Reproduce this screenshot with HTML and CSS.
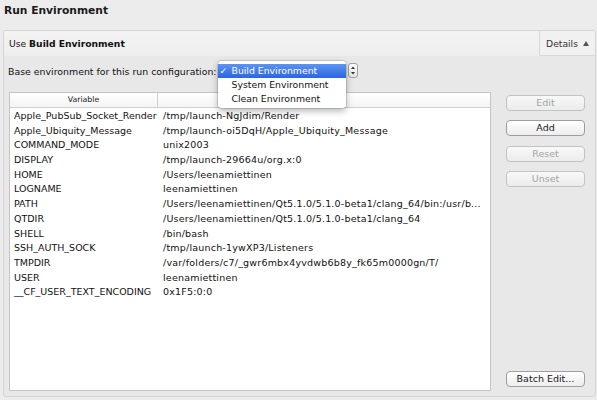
FILE: index.html
```html
<!DOCTYPE html>
<html>
<head>
<meta charset="utf-8">
<link rel="stylesheet" href="styles.css">
</head>
<body>
<div class="title">Run Environment</div>
<div class="panel">
  <div class="phead">
    <div class="use">Use <b>Build Environment</b></div>
    <div class="details"><span>Details</span><svg width="6" height="5" viewBox="0 0 6 5"><polygon points="3,0 6,5 0,5" fill="#555"/></svg></div>
  </div>
  <div class="pbody">
    <div class="baserow">
      <span class="baselabel">Base environment for this run configuration:</span>
      <div class="combo">
        <div class="combo-field"></div>
        <div class="stepper"><svg width="8" height="13" viewBox="0 0 8 13"><polygon points="4,2.5 6,5 2,5" fill="#333"/><polygon points="4,10.5 6,8 2,8" fill="#333"/></svg></div>
        <div class="popup">
          <div class="item sel"><span class="check">✓</span>Build Environment</div>
          <div class="item">System Environment</div>
          <div class="item">Clean Environment</div>
        </div>
      </div>
    </div>
    <div class="main">
      <div class="table">
        <div class="thead">
          <div class="th c1">Variable</div>
          <div class="th c2">Value</div>
        </div>
        <div class="tbody">
          <div class="tr"><div class="c1">Apple_PubSub_Socket_Render</div><div class="c2">/tmp/launch-NgJdim/Render</div></div>
          <div class="tr"><div class="c1">Apple_Ubiquity_Message</div><div class="c2">/tmp/launch-oi5DqH/Apple_Ubiquity_Message</div></div>
          <div class="tr"><div class="c1">COMMAND_MODE</div><div class="c2">unix2003</div></div>
          <div class="tr"><div class="c1">DISPLAY</div><div class="c2">/tmp/launch-29664u/org.x:0</div></div>
          <div class="tr"><div class="c1">HOME</div><div class="c2">/Users/leenamiettinen</div></div>
          <div class="tr"><div class="c1">LOGNAME</div><div class="c2">leenamiettinen</div></div>
          <div class="tr"><div class="c1">PATH</div><div class="c2">/Users/leenamiettinen/Qt5.1.0/5.1.0-beta1/clang_64/bin:/usr/b...</div></div>
          <div class="tr"><div class="c1">QTDIR</div><div class="c2">/Users/leenamiettinen/Qt5.1.0/5.1.0-beta1/clang_64</div></div>
          <div class="tr"><div class="c1">SHELL</div><div class="c2">/bin/bash</div></div>
          <div class="tr"><div class="c1">SSH_AUTH_SOCK</div><div class="c2">/tmp/launch-1ywXP3/Listeners</div></div>
          <div class="tr"><div class="c1">TMPDIR</div><div class="c2">/var/folders/c7/_gwr6mbx4yvdwb6b8y_fk65m0000gn/T/</div></div>
          <div class="tr"><div class="c1">USER</div><div class="c2">leenamiettinen</div></div>
          <div class="tr"><div class="c1">__CF_USER_TEXT_ENCODING</div><div class="c2">0x1F5:0:0</div></div>
        </div>
      </div>
      <div class="buttons">
        <div class="btn disabled">Edit</div>
        <div class="btn">Add</div>
        <div class="btn disabled">Reset</div>
        <div class="btn disabled">Unset</div>
        <div class="btn batch">Batch Edit...</div>
      </div>
    </div>
  </div>
</div>
</body>
</html>
```
FILE: styles.css
```css
html, body {
  margin: 0;
  padding: 0;
}
body {
  width: 597px;
  height: 400px;
  overflow: hidden;
  background: #ececec;
  font-family: "DejaVu Sans", "Liberation Sans", sans-serif;
  font-size: 9.5px;
  color: #111;
}
.title {
  height: 30px;
  box-sizing: border-box;
  padding: 4px 0 0 4px;
  font-weight: bold;
  font-size: 10.7px;
  line-height: 14px;
  color: #1a1a1a;
}
.panel {
  margin-left: 3px;
  width: 593px;
  height: 367px;
  box-sizing: border-box;
  border: 1px solid #d4d4d4;
  border-radius: 3px;
  background: #e8e8e8;
  display: flex;
  flex-direction: column;
  overflow: hidden;
}
.phead {
  height: 25px;
  display: flex;
  background: linear-gradient(#f3f3f3, #eeeeee);
}
.use {
  flex: 1;
  padding-left: 5px;
  line-height: 25px;
  font-size: 9.2px;
}
.details {
  width: 56px;
  box-sizing: border-box;
  border-left: 1px solid #d8d8d8;
  border-bottom: 1px solid #d8d8d8;
  border-bottom-left-radius: 2px;
  display: flex;
  align-items: center;
  justify-content: center;
  gap: 5px;
  color: #333;
  background: #f1f1f1;
  font-size: 9.2px;
}
.pbody {
  flex: 1;
  display: flex;
  flex-direction: column;
  padding: 7px 10px 5px 5px;
}
.baserow {
  height: 16px;
  margin-bottom: 13px;
  display: flex;
  align-items: center;
}
.baselabel {
  margin-left: -1px;
  font-size: 9.4px;
  white-space: nowrap;
}
.combo {
  position: relative;
  margin-left: 1px;
  width: 140px;
  height: 16px;
  display: flex;
}
.combo-field {
  flex: 1;
}
.stepper {
  width: 10px;
  height: 15px;
  box-sizing: border-box;
  border: 1px solid #a0a0a0;
  border-radius: 3px;
  background: linear-gradient(#ffffff, #e6e6e6);
  display: flex;
  align-items: center;
  justify-content: center;
}
.popup {
  position: absolute;
  left: 0;
  top: -2px;
  width: 128px;
  height: 47px;
  box-sizing: border-box;
  padding: 3px 0;
  background: rgba(255, 255, 255, 0.97);
  border-radius: 4px;
  box-shadow: 0 0 0 1px rgba(0,0,0,0.12), 0 3px 7px rgba(0,0,0,0.3);
}
.item {
  height: 14px;
  line-height: 14px;
  padding-left: 14px;
  position: relative;
  color: #111;
  white-space: nowrap;
  font-size: 9.3px;
}
.item.sel {
  background: linear-gradient(#5d93f2, #2c66de);
  color: #fff;
}
.check {
  position: absolute;
  left: 2px;
  top: 0;
  font-weight: bold;
}
.main {
  flex: 1;
  display: flex;
  gap: 15px;
}
.table {
  width: 482px;
  box-sizing: border-box;
  border: 1px solid #c4c4c4;
  background: #fff;
  overflow: hidden;
}
.thead {
  height: 15px;
  box-sizing: border-box;
  display: flex;
  border-bottom: 1px solid #cfcfcf;
  background: linear-gradient(#ffffff, #f4f4f4);
}
.th {
  font-size: 7.8px;
  line-height: 14px;
  text-align: center;
  color: #222;
}
.th.c1 {
  width: 148px;
  box-sizing: border-box;
  border-right: 1px solid #d0d0d0;
}
.th.c2 {
  flex: 1;
  color: #aaa;
}
.tbody {
  padding-top: 1px;
}
.tr {
  height: 14.7px;
  line-height: 14.7px;
  display: flex;
  white-space: nowrap;
}
.tr .c1 {
  width: 148px;
  box-sizing: border-box;
  padding-left: 4px;
}
.tr .c2 {
  flex: 1;
  padding-left: 5px;
  overflow: hidden;
  letter-spacing: 0.2px;
}
.buttons {
  width: 79px;
  display: flex;
  flex-direction: column;
  gap: 9.4px;
  padding: 3px 0 4px;
}
.btn {
  height: 16px;
  box-sizing: border-box;
  border: 1px solid #9e9e9e;
  border-radius: 4px;
  background: linear-gradient(#ffffff, #ededed);
  text-align: center;
  line-height: 14px;
  color: #1a1a1a;
}
.btn.disabled {
  color: #a4a4a4;
  border-color: #c2c2c2;
  background: linear-gradient(#f8f8f8, #ececec);
}
.btn.batch {
  margin-top: auto;
}
```
